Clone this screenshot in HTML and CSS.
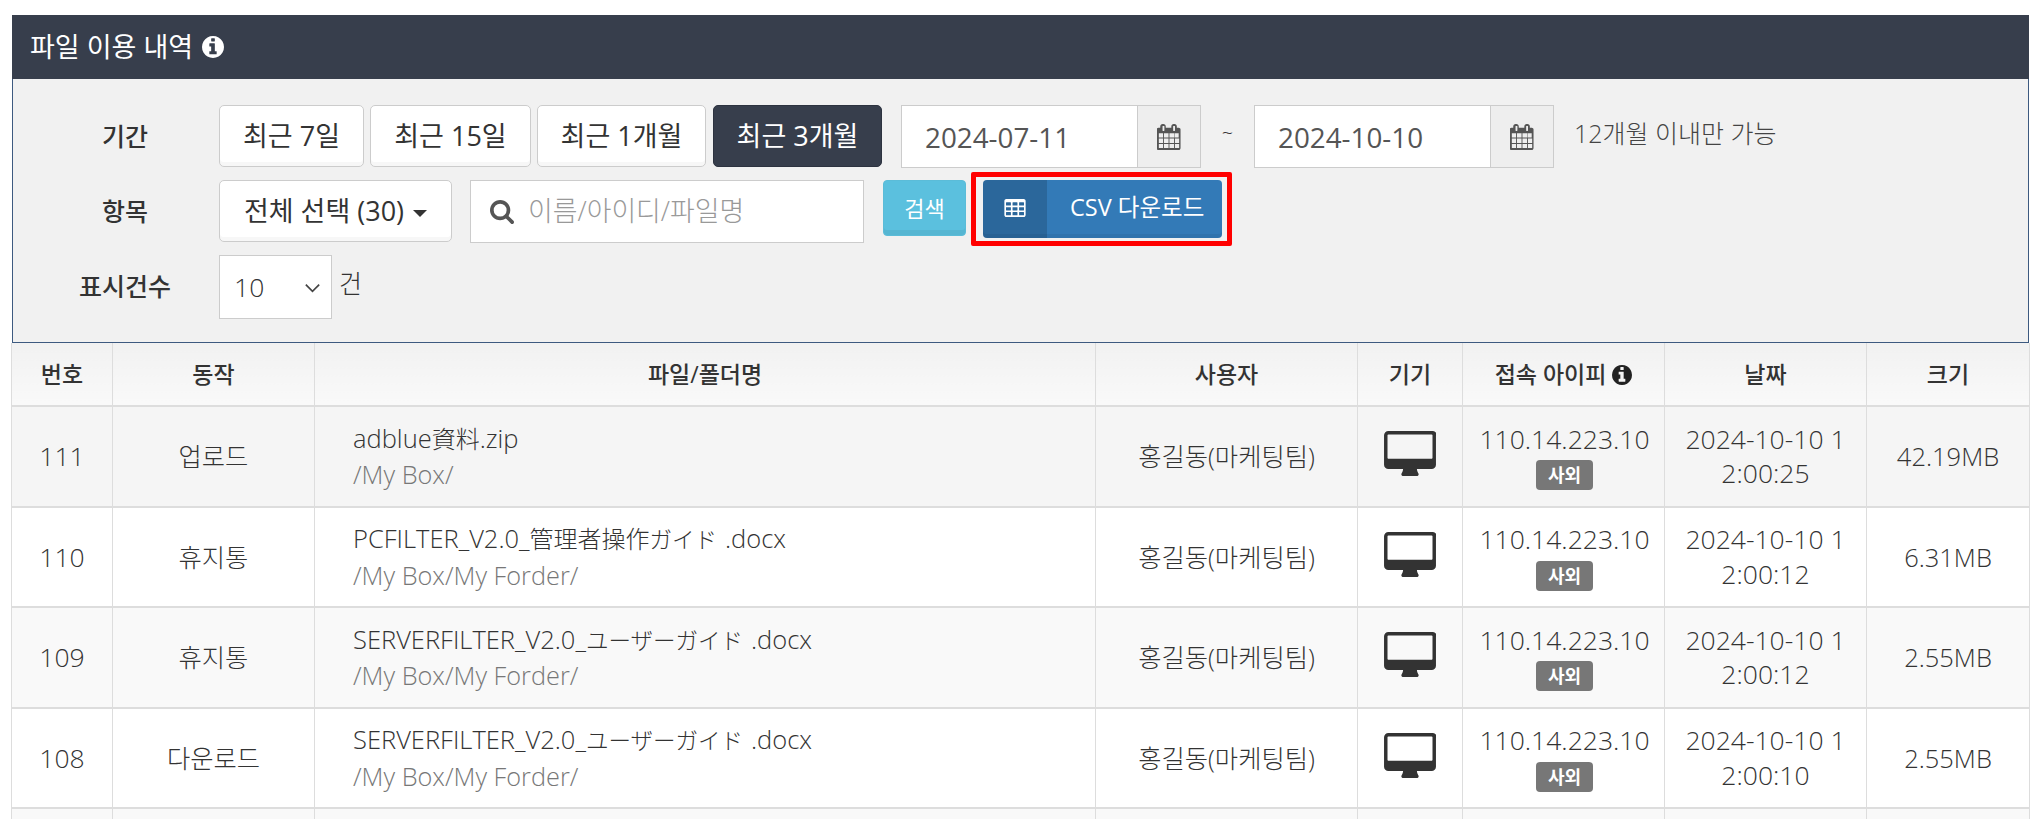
FILE: index.html
```html
<!DOCTYPE html>
<html lang="ko">
<head>
<meta charset="utf-8">
<title>파일 이용 내역</title>
<link rel="stylesheet" href="styles.css">
</head>
<body>
<svg class="sprite" xmlns="http://www.w3.org/2000/svg">
  <symbol id="i-info" viewBox="0 0 1536 1536"><path d="M1024 1248v-160q0-14-9-23t-23-9h-96v-512q0-14-9-23t-23-9h-320q-14 0-23 9t-9 23v160q0 14 9 23t23 9h96v320h-96q-14 0-23 9t-9 23v160q0 14 9 23t23 9h448q14 0 23-9t9-23zm-128-896v-160q0-14-9-23t-23-9h-192q-14 0-23 9t-9 23v160q0 14 9 23t23 9h192q14 0 23-9t9-23zm640 416q0 209-103 385.5t-279.5 279.5-385.5 103-385.5-103-279.5-279.5-103-385.5 103-385.5 279.5-279.5 385.5-103 385.5 103 279.5 279.5 103 385.5z"/></symbol>
  <symbol id="i-cal" viewBox="0 0 1664 1792"><path d="M128 1664h288v-288h-288v288zm352 0h320v-288h-320v288zm-352-352h288v-320h-288v320zm352 0h320v-320h-320v320zm-352-384h288v-288h-288v288zm736 736h320v-288h-320v288zm-384-736h320v-288h-320v288zm768 736h288v-288h-288v288zm-384-352h320v-320h-320v320zm-352-864v-288q0-13-9.500-22.500t-22.500-9.500h-64q-13 0-22.500 9.500t-9.500 22.500v288q0 13 9.500 22.500t22.500 9.500h64q13 0 22.500-9.500t9.500-22.500zm736 864h288v-320h-288v320zm-384-384h320v-288h-320v288zm352 0h288v-288h-288v288zm32-480v-288q0-13-9.500-22.500t-22.500-9.500h-64q-13 0-22.500 9.500t-9.500 22.500v288q0 13 9.500 22.500t22.500 9.500h64q13 0 22.500-9.500t9.500-22.500zm384-64v1280q0 52-38 90t-90 38h-1408q-52 0-90-38t-38-90v-1280q0-52 38-90t90-38h128v-96q0-66 47-113t113-47h64q66 0 113 47t47 113v96h384v-96q0-66 47-113t113-47h64q66 0 113 47t47 113v96h128q52 0 90 38t38 90z"/></symbol>
  <symbol id="i-search" viewBox="0 0 1664 1664"><path d="M1152 704q0-185-131.500-316.500t-316.500-131.500-316.500 131.500-131.500 316.500 131.500 316.500 316.500 131.500 316.500-131.500 131.500-316.500zm512 832q0 52-38 90t-90 38q-54 0-90-38l-343-342q-179 124-399 124-143 0-273.500-55.500t-225-150-150-225-55.500-273.500 55.500-273.500 150-225 225-150 273.500-55.500 273.500 55.500 225 150 150 225 55.500 273.500q0 220-124 399l343 343q37 37 37 90z"/></symbol>
  <symbol id="i-table" viewBox="0 128 1664 1408"><path d="M512 1376v-192q0-14-9-23t-23-9h-320q-14 0-23 9t-9 23v192q0 14 9 23t23 9h320q14 0 23-9t9-23zm0-384v-192q0-14-9-23t-23-9h-320q-14 0-23 9t-9 23v192q0 14 9 23t23 9h320q14 0 23-9t9-23zm512 384v-192q0-14-9-23t-23-9h-320q-14 0-23 9t-9 23v192q0 14 9 23t23 9h320q14 0 23-9t9-23zm-512-768v-192q0-14-9-23t-23-9h-320q-14 0-23 9t-9 23v192q0 14 9 23t23 9h320q14 0 23-9t9-23zm512 384v-192q0-14-9-23t-23-9h-320q-14 0-23 9t-9 23v192q0 14 9 23t23 9h320q14 0 23-9t9-23zm512 384v-192q0-14-9-23t-23-9h-320q-14 0-23 9t-9 23v192q0 14 9 23t23 9h320q14 0 23-9t9-23zm-512-768v-192q0-14-9-23t-23-9h-320q-14 0-23 9t-9 23v192q0 14 9 23t23 9h320q14 0 23-9t9-23zm512 384v-192q0-14-9-23t-23-9h-320q-14 0-23 9t-9 23v192q0 14 9 23t23 9h320q14 0 23-9t9-23zm0-384v-192q0-14-9-23t-23-9h-320q-14 0-23 9t-9 23v192q0 14 9 23t23 9h320q14 0 23-9t9-23zm128-320v1088q0 66-47 113t-113 47h-1344q-66 0-113-47t-47-113v-1088q0-66 47-113t113-47h1344q66 0 113 47t47 113z"/></symbol>
  <symbol id="i-desktop" viewBox="0 0 1920 1664"><path d="M1792 992v-832q0-13-9.500-22.500t-22.500-9.500h-1600q-13 0-22.500 9.500t-9.500 22.500v832q0 13 9.500 22.500t22.500 9.500h1600q13 0 22.500-9.500t9.500-22.500zm128-832v1088q0 66-47 113t-113 47h-544q0 37 16 77.500t32 71 16 43.500q0 26-19 45t-45 19h-512q-26 0-45-19t-19-45q0-14 16-44t32-70 16-78h-544q-66 0-113-47t-47-113v-1088q0-66 47-113t113-47h1632q66 0 113 47t47 113z"/></symbol>
  <symbol id="i-chevron" viewBox="0 0 20 12"><path d="M2 2l8 8 8-8" fill="none" stroke="currentColor" stroke-width="2"/></symbol>
</svg>

<header class="title-bar">
  <span>파일 이용 내역</span>
  <svg class="icon-info"><use href="#i-info"/></svg>
</header>

<section class="filters">
  <div class="filter-row">
    <label class="filter-label">기간</label>
    <div class="btn-group">
      <button class="btn w-7">최근 7일</button>
      <button class="btn w-15">최근 15일</button>
      <button class="btn w-1m">최근 1개월</button>
      <button class="btn btn-dark w-3m">최근 3개월</button>
    </div>
    <div class="date-group">
      <input class="date-input" type="text" value="2024-07-11">
      <span class="date-addon"><svg class="icon-cal"><use href="#i-cal"/></svg></span>
    </div>
    <span class="tilde">~</span>
    <div class="date-group">
      <input class="date-input" type="text" value="2024-10-10">
      <span class="date-addon"><svg class="icon-cal"><use href="#i-cal"/></svg></span>
    </div>
    <span class="note">12개월 이내만 가능</span>
  </div>

  <div class="filter-row">
    <label class="filter-label">항목</label>
    <button class="btn dropdown">전체 선택 (30) <span class="caret"></span></button>
    <div class="search-box">
      <svg class="icon-search"><use href="#i-search"/></svg>
      <input class="search-input" type="text" placeholder="이름/아이디/파일명">
    </div>
    <button class="btn-search">검색</button>
    <div class="highlight">
      <button class="btn-csv">
        <span class="csv-icon"><svg class="icon-table"><use href="#i-table"/></svg></span>
        <span class="csv-text">CSV 다운로드</span>
      </button>
    </div>
  </div>

  <div class="filter-row">
    <label class="filter-label">표시건수</label>
    <div class="select-wrap">
      <select class="count-select"><option>10</option><option>20</option><option>50</option></select>
      <svg class="icon-chevron"><use href="#i-chevron"/></svg>
    </div>
    <span class="count-unit">건</span>
  </div>
</section>

<table class="log-table">
  <colgroup>
    <col class="c-no"><col class="c-act"><col class="c-file"><col class="c-user"><col class="c-dev"><col class="c-ip"><col class="c-date"><col class="c-size">
  </colgroup>
  <thead>
    <tr>
      <th>번호</th><th>동작</th><th>파일/폴더명</th><th>사용자</th><th>기기</th>
      <th>접속 아이피 <svg class="icon-info-sm"><use href="#i-info"/></svg></th>
      <th>날짜</th><th>크기</th>
    </tr>
  </thead>
  <tbody>
    <tr class="hover">
      <td>111</td><td class="ko">업로드</td>
      <td class="file"><div>adblue<span class="kanji">資料</span>.zip</div><div class="path">/My Box/</div></td>
      <td class="ko">홍길동(마케팅팀)</td>
      <td><svg class="icon-desktop"><use href="#i-desktop"/></svg></td>
      <td class="ip">110.14.223.10<br><span class="badge">사외</span></td>
      <td class="date">2024-10-10 12:00:25</td><td class="size">42.19MB</td>
    </tr>
    <tr>
      <td>110</td><td class="ko">휴지통</td>
      <td class="file"><div>PCFILTER_V2.0_<span class="kanji">管理者操作</span><span class="kana">ガイド</span>.docx</div><div class="path">/My Box/My Forder/</div></td>
      <td class="ko">홍길동(마케팅팀)</td>
      <td><svg class="icon-desktop"><use href="#i-desktop"/></svg></td>
      <td class="ip">110.14.223.10<br><span class="badge">사외</span></td>
      <td class="date">2024-10-10 12:00:12</td><td class="size">6.31MB</td>
    </tr>
    <tr class="odd">
      <td>109</td><td class="ko">휴지통</td>
      <td class="file"><div>SERVERFILTER_V2.0_<span class="kana">ユーザーガイド</span>.docx</div><div class="path">/My Box/My Forder/</div></td>
      <td class="ko">홍길동(마케팅팀)</td>
      <td><svg class="icon-desktop"><use href="#i-desktop"/></svg></td>
      <td class="ip">110.14.223.10<br><span class="badge">사외</span></td>
      <td class="date">2024-10-10 12:00:12</td><td class="size">2.55MB</td>
    </tr>
    <tr>
      <td>108</td><td class="ko">다운로드</td>
      <td class="file"><div>SERVERFILTER_V2.0_<span class="kana">ユーザーガイド</span>.docx</div><div class="path">/My Box/My Forder/</div></td>
      <td class="ko">홍길동(마케팅팀)</td>
      <td><svg class="icon-desktop"><use href="#i-desktop"/></svg></td>
      <td class="ip">110.14.223.10<br><span class="badge">사외</span></td>
      <td class="date">2024-10-10 12:00:10</td><td class="size">2.55MB</td>
    </tr>
    <tr class="odd">
      <td>&nbsp;</td><td></td><td></td><td></td><td></td><td></td><td></td><td></td>
    </tr>
  </tbody>
</table>
</body>
</html>
```

FILE: styles.css
```css
* { box-sizing: border-box; }
html, body { height: 819px; overflow: hidden; }
body {
  margin: 0;
  padding: 15px 13px 0 12px;
  background: #fff;
  color: #333;
  font-family: "Open Sans", "Noto Sans CJK KR", "Noto Sans CJK JP", sans-serif;
  font-size: 26.5px;
  font-weight: 300;
  line-height: 34.5px;
}
button, input, select { font: inherit; color: inherit; }
.sprite { display: none; }

.title-bar {
  height: 64px;
  background: #373e4c;
  color: #fff;
  display: flex;
  align-items: center;
  gap: 9px;
  padding-left: 18px;
  font-size: 27px;
  font-weight: 400;
}
.icon-info { width: 22px; height: 22px; fill: #fff; }

.filters {
  height: 264px;
  background: #f1f1f1;
  border: 1px solid #3d5a80;
  border-top: 0;
  padding-top: 26px;
  display: flex;
  flex-direction: column;
  gap: 12px;
}
.filter-row { display: flex; align-items: flex-start; height: 63px; }
.filter-label {
  width: 206px;
  flex: none;
  padding-left: 18px;
  text-align: center;
  font-size: 25px;
  font-weight: 500;
  line-height: 62px;
}
.btn-group { display: flex; gap: 6px; }
.btn {
  height: 62px;
  padding: 0;
  background: #fff;
  border: 1px solid #ccc;
  border-radius: 5px;
  box-shadow: inset 0 -4px 0 rgba(0,0,0,.03);
  font-size: 27px;
  font-weight: 400;
}
.w-7 { width: 145px; }
.w-15 { width: 161px; }
.w-1m { width: 169px; }
.w-3m { width: 169px; margin-left: 1px; }
.btn-dark { background: #373e4c; border-color: #2d3340; color: #fff; box-shadow: none; }

.date-group { display: flex; height: 63px; margin-left: 19px; }
.date-group + .tilde + .date-group { margin-left: 0; }
.date-input {
  width: 236px;
  height: 63px;
  padding: 0 23px;
  border: 1px solid #ccc;
  border-right: 0;
  background: #fff;
  color: #555;
  font-size: 27.800px;
  font-weight: 400;
}
.date-addon {
  width: 64px;
  display: flex;
  align-items: center;
  justify-content: center;
  background: #eee;
  border: 1px solid #ccc;
}
.icon-cal { width: 24px; height: 26px; fill: #555; }
.tilde { width: 53px; text-align: center; font-size: 20px; line-height: 56px; }
.note { margin-left: 20px; font-size: 25px; line-height: 56px; color: #444; }

.dropdown { width: 233px; }
.caret {
  display: inline-block;
  margin-left: 2px;
  vertical-align: middle;
  border-top: 7px solid #333;
  border-left: 7px solid transparent;
  border-right: 7px solid transparent;
}
.search-box {
  width: 394px;
  height: 63px;
  margin-left: 18px;
  display: flex;
  align-items: center;
  gap: 14px;
  padding-left: 19px;
  background: #fff;
  border: 1px solid #ccc;
}
.icon-search { width: 24px; height: 24px; fill: #555; flex: none; }
.search-input { border: 0; outline: 0; background: transparent; width: 330px; padding: 0; font-size: 26.900px; }
.search-input::placeholder { color: #999; opacity: 1; }
.btn-search {
  width: 83px;
  height: 56px;
  margin-left: 19px;
  padding: 0;
  background: #5bc0de;
  border: 1px solid #5bbcd8;
  border-radius: 4px;
  box-shadow: inset 0 -5px 0 rgba(0,0,0,.05);
  color: #fff;
  font-weight: 400;
  font-size: 22px;
}
.highlight {
  margin: -8px 0 0 5px;
  padding: 3px 5px 3px 7px;
  width: 261px;
  height: 74px;
  border: 5px solid #f00;
  border-radius: 2px;
  flex: none;
}
.btn-csv {
  display: flex;
  width: 239px;
  height: 58px;
  padding: 0;
  background: #337ab7;
  border: 0;
  border-radius: 4px;
  overflow: hidden;
  color: #fff;
  font-size: 23.500px;
  font-weight: 400;
  box-shadow: inset 0 -4px 0 rgba(0,0,0,.05);
}
.csv-icon {
  width: 64px;
  height: 100%;
  display: flex;
  align-items: flex-start;
  justify-content: center;
  padding-top: 19px;
  background: rgba(0,0,0,.15);
}
.icon-table { width: 22px; height: 18px; fill: #fff; }
.csv-text { flex: 1; line-height: 54px; padding-left: 23px; text-align: left; }

.select-wrap { position: relative; width: 113px; height: 64px; }
.count-select {
  width: 100%;
  height: 100%;
  padding-left: 14px;
  appearance: none;
  background: #fff;
  border: 1px solid #ccc;
  border-radius: 0;
  font-size: 26.500px;
}
.icon-chevron {
  position: absolute;
  right: 11px;
  top: 28px;
  width: 17px;
  height: 10px;
  color: #444;
  pointer-events: none;
}
.count-unit { margin-left: 7px; line-height: 56px; font-size: 25px; }

.log-table {
  width: 2018px;
  margin-left: -1px;
  table-layout: fixed;
  border-collapse: collapse;
  border-left: 1px solid #ddd;
  border-right: 1px solid #ddd;
}
.c-no { width: 101px; }
.c-act { width: 202px; }
.c-file { width: 781px; }
.c-user { width: 262px; }
.c-dev { width: 105px; }
.c-ip { width: 202px; }
.c-date { width: 202px; }
.c-size { width: 163px; }
th, td {
  border: 1px solid #ddd;
  border-top: 0;
  text-align: center;
  vertical-align: middle;
  padding: 0 8px;
}
th {
  height: 63px;
  font-weight: 500;
  font-size: 23px;
  background: linear-gradient(#f1f1f1, #f9f9f9);
  border-bottom-width: 2px;
}
td { height: 100.500px; border-bottom-width: 2px; }
td.ko { font-size: 25.300px; }
td.size { font-size: 25.500px; }
.hover td { background: #f5f5f5; }
.odd td { background: #f9f9f9; }
td.file { text-align: left; padding-left: 38px; font-size: 25.500px; }
.kanji { font-size: 24px; }
.kana { font-size: 22.500px; margin-right: 8px; }
.path { color: #777; font-size: 25.300px; }
td.ip { padding-left: 10px; }
td.date { word-break: break-all; padding: 0 17px; }
.icon-info-sm { width: 20px; height: 20px; fill: #222; vertical-align: -2px; }
.icon-desktop { display: block; width: 52px; height: 45px; margin: -5px auto 0; fill: #333; }
.badge {
  display: inline-block;
  height: 30px;
  padding: 0 12px;
  margin-top: 4px;
  margin-bottom: -3px;
  background: #777;
  border-radius: 4px;
  color: #fff;
  font-size: 18px;
  font-weight: 700;
  line-height: 30px;
  vertical-align: top;
}
```
